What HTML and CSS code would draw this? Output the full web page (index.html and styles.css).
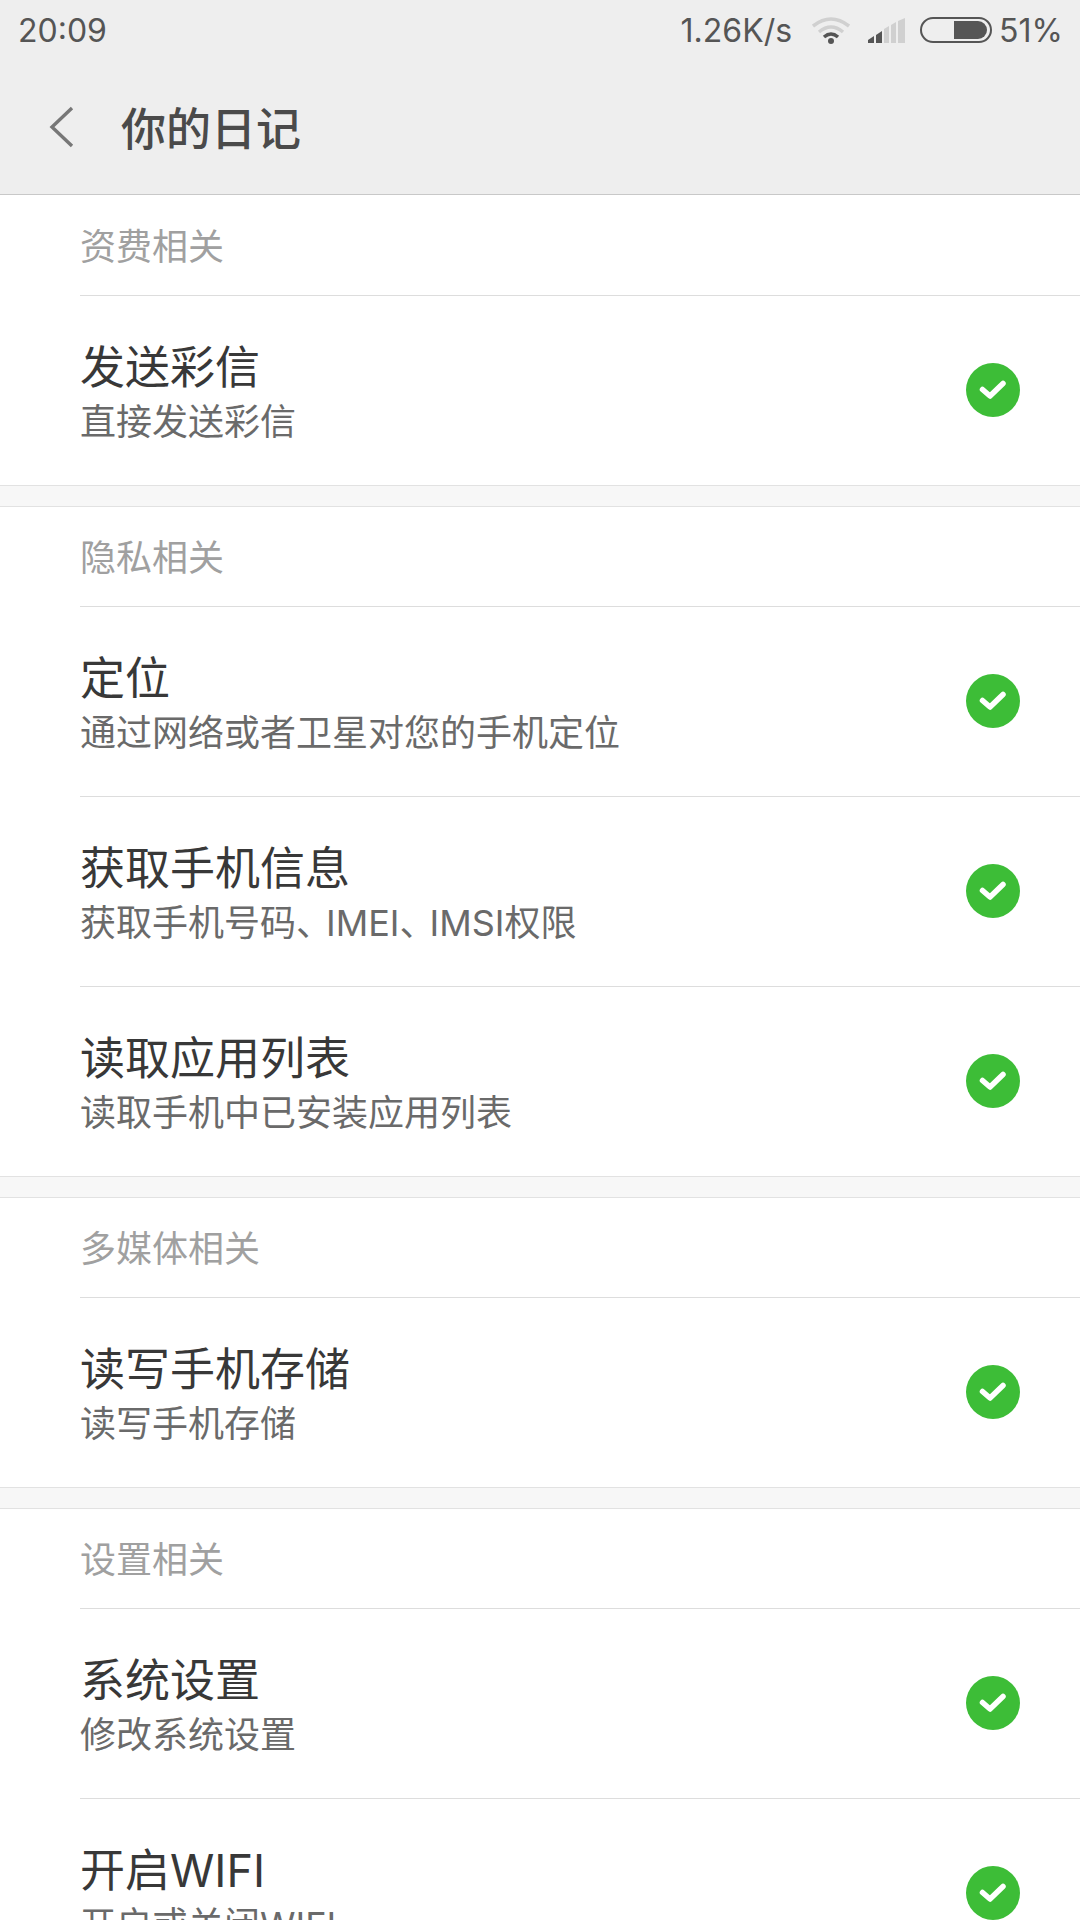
FILE: index.html
```html
<!DOCTYPE html>
<html lang="zh-CN">
<head>
    <meta charset="UTF-8">
    <meta name="viewport" content="width=device-width, initial-scale=1.0">
    <title>你的日记</title>
    <link rel="stylesheet" href="styles.css">
</head>
<body>
    <svg class="svg-defs" width="0" height="0">
        <symbol id="check" viewBox="0 0 54 54">
            <circle cx="27" cy="27" r="27" fill="#3dbd37"/>
            <path d="M16.5 26.5 L24 33 L37 20.5" fill="none" stroke="#ffffff" stroke-width="5.5" stroke-linecap="round" stroke-linejoin="round"/>
        </symbol>
    </svg>

    <header class="top">
        <div class="status-bar">
            <span class="time">20:09</span>
            <div class="status-right">
                <span class="speed">1.26K/s</span>
                <svg class="wifi" width="38" height="27" viewBox="0 0 38 27">
                    <path d="M1 9 Q19 -5 37 9" fill="none" stroke="#d0d0d0" stroke-width="3.5"/>
                    <path d="M7 15 Q19 5 31 15" fill="none" stroke="#d0d0d0" stroke-width="3.5"/>
                    <path d="M12 20 Q19 14 26 20" fill="none" stroke="#555555" stroke-width="3.5"/>
                    <circle cx="19" cy="24" r="3" fill="#555555"/>
                </svg>
                <svg class="signal" width="37" height="25" viewBox="0 0 37 25">
                    <path d="M0 25 L0 22 L6 18 L6 25 Z" fill="#555555"/>
                    <path d="M8 25 L8 17 L14 13 L14 25 Z" fill="#555555"/>
                    <path d="M16 25 L16 11 L21 8 L21 25 Z" fill="#d0d0d0"/>
                    <path d="M23 25 L23 7 L28 4 L28 25 Z" fill="#d0d0d0"/>
                    <path d="M30 25 L30 3 L37 0 L37 25 Z" fill="#d0d0d0"/>
                </svg>
                <div class="battery"><div class="battery-fill"></div></div>
                <span class="percent">51%</span>
            </div>
        </div>
        <div class="title-bar">
            <svg class="back" width="26" height="42" viewBox="0 0 26 42">
                <path d="M24 2 L4 21 L24 40" fill="none" stroke="#777777" stroke-width="3.4"/>
            </svg>
            <h1>你的日记</h1>
        </div>
    </header>

    <section class="group">
        <div class="group-title">资费相关</div>
        <div class="row">
            <div class="row-text"><div class="row-name">发送彩信</div><div class="row-desc">直接发送彩信</div></div>
            <svg class="tick"><use href="#check"/></svg>
        </div>
    </section>

    <section class="group">
        <div class="group-title">隐私相关</div>
        <div class="row">
            <div class="row-text"><div class="row-name">定位</div><div class="row-desc">通过网络或者卫星对您的手机定位</div></div>
            <svg class="tick"><use href="#check"/></svg>
        </div>
        <div class="row">
            <div class="row-text"><div class="row-name">获取手机信息</div><div class="row-desc">获取手机号码<span class="dun">、</span>IMEI<span class="dun">、</span>IMSI权限</div></div>
            <svg class="tick"><use href="#check"/></svg>
        </div>
        <div class="row">
            <div class="row-text"><div class="row-name">读取应用列表</div><div class="row-desc">读取手机中已安装应用列表</div></div>
            <svg class="tick"><use href="#check"/></svg>
        </div>
    </section>

    <section class="group">
        <div class="group-title">多媒体相关</div>
        <div class="row">
            <div class="row-text"><div class="row-name">读写手机存储</div><div class="row-desc">读写手机存储</div></div>
            <svg class="tick"><use href="#check"/></svg>
        </div>
    </section>

    <section class="group">
        <div class="group-title">设置相关</div>
        <div class="row">
            <div class="row-text"><div class="row-name">系统设置</div><div class="row-desc">修改系统设置</div></div>
            <svg class="tick"><use href="#check"/></svg>
        </div>
        <div class="row">
            <div class="row-text"><div class="row-name">开启WIFI</div><div class="row-desc">开启或关闭WIFI</div></div>
            <svg class="tick"><use href="#check"/></svg>
        </div>
    </section>
</body>
</html>
```

FILE: styles.css
```css
html {
    height: 100%;
    overflow: hidden;
}

body {
    margin: 0;
    height: 1920px;
    overflow: hidden;
    font-family: Inter, "Noto Sans CJK SC", sans-serif;
    background-color: #f7f7f7;
}

.svg-defs {
    position: absolute;
}

.top {
    height: 194px;
    background-color: #eeeeee;
    border-bottom: 1px solid #c8c8c8;
}

.status-bar {
    height: 60px;
    padding: 0 17px 0 18px;
    display: flex;
    justify-content: space-between;
    align-items: center;
    font-size: 32px;
    color: #555555;
}

.status-right {
    display: flex;
    align-items: center;
}

.wifi {
    margin-left: 20px;
}

.signal {
    margin-left: 18px;
}

.battery {
    width: 72px;
    height: 26px;
    box-sizing: border-box;
    margin-left: 15px;
    padding: 2px 3px;
    border: 2px solid #555555;
    border-radius: 13px;
    display: flex;
    justify-content: flex-end;
}

.battery-fill {
    width: 33px;
    height: 100%;
    background-color: #555555;
    border-radius: 0 10px 10px 0;
}

.percent {
    margin-left: 7px;
}

.title-bar {
    height: 134px;
    display: flex;
    align-items: center;
}

.back {
    margin-left: 48px;
}

h1 {
    margin: 0 0 2px 47px;
    font-size: 45px;
    font-weight: 500;
    color: #4a4a4a;
}

.group {
    background-color: #ffffff;
    border-top: 1px solid #e2e2e2;
    border-bottom: 1px solid #e2e2e2;
    margin-bottom: 20px;
    padding-left: 80px;
}

.group:first-of-type {
    border-top-color: #ffffff;
}

.group-title {
    height: 100px;
    box-sizing: border-box;
    border-bottom: 1px solid #dddddd;
    padding-top: 25px;
    font-size: 36px;
    line-height: 52px;
    color: #a0a0a0;
}

.row {
    height: 190px;
    box-sizing: border-box;
    padding-right: 60px;
    display: flex;
    justify-content: space-between;
    align-items: center;
    border-bottom: 1px solid #dddddd;
}

.row:last-child {
    border-bottom: none;
    height: 189px;
}

.row-name {
    font-size: 45px;
    line-height: 64px;
    color: #383838;
}

.row-desc {
    font-size: 36px;
    line-height: 45px;
    color: #6a6a6a;
}

.dun {
    letter-spacing: -6px;
}

.tick {
    width: 54px;
    height: 54px;
    margin-bottom: 1px;
    flex-shrink: 0;
}
```
